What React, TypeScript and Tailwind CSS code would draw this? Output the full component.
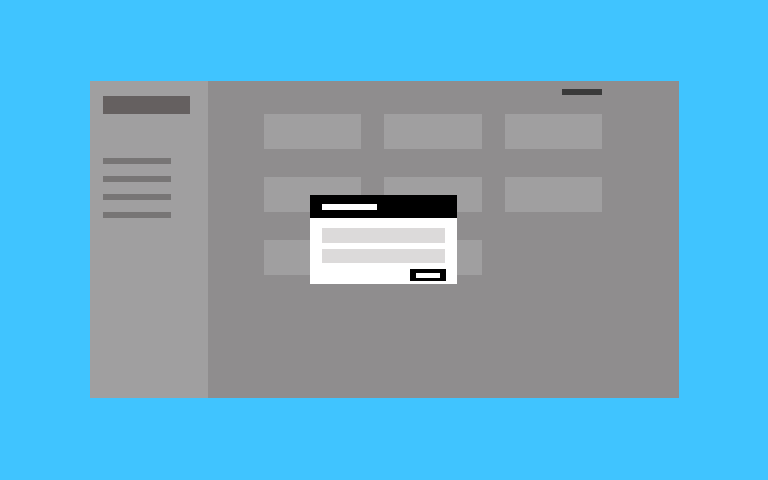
export default function App() {
  const cards = [0, 1, 2, 3, 4, 5, 6, 7];
  return (
    <div className="h-[480px] w-[768px] bg-[#40c4ff] pl-[90px] pt-[81px]">
      <div className="relative flex h-[317px] w-[589px] bg-[#8f8d8e]">
        <aside className="flex w-[118px] flex-col bg-[#a09fa0] pl-[13px] pt-[15px]">
          <div className="h-[18px] w-[87px] bg-[#656060]" />
          <nav className="mt-[44px] flex flex-col gap-[12px]">
            <div className="h-[6px] w-[68px] bg-[#777575]" />
            <div className="h-[6px] w-[68px] bg-[#777575]" />
            <div className="h-[6px] w-[68px] bg-[#777575]" />
            <div className="h-[6px] w-[68px] bg-[#777575]" />
          </nav>
        </aside>
        <main className="relative flex flex-1 flex-col">
          <div className="flex justify-end pr-[77px] pt-[8px]">
            <div className="h-[6px] w-[40px] bg-[#3a3a3a]" />
          </div>
          <div className="ml-[56px] mt-[19px] grid w-[338px] grid-cols-3 gap-x-[23px] gap-y-[28px]">
            {cards.map((c) => (
              <div key={c} className="h-[35px] bg-[#a09fa0]" />
            ))}
          </div>
          <div className="absolute left-[102px] top-[114px] flex h-[89px] w-[147px] flex-col bg-white">
            <div className="flex h-[23px] items-center bg-black pl-[12px]">
              <div className="h-[6px] w-[55px] bg-white" />
            </div>
            <div className="flex flex-col gap-[6px] px-[12px] pt-[10px]">
              <div className="h-[15px] bg-[#dcdada]" />
              <div className="h-[14px] bg-[#dcdada]" />
            </div>
            <div className="flex justify-end pr-[11px] pt-[6px]">
              <div className="flex h-[12px] w-[36px] items-center justify-center bg-black">
                <div className="h-[5px] w-[24px] bg-white" />
              </div>
            </div>
          </div>
        </main>
      </div>
    </div>
  );
}
